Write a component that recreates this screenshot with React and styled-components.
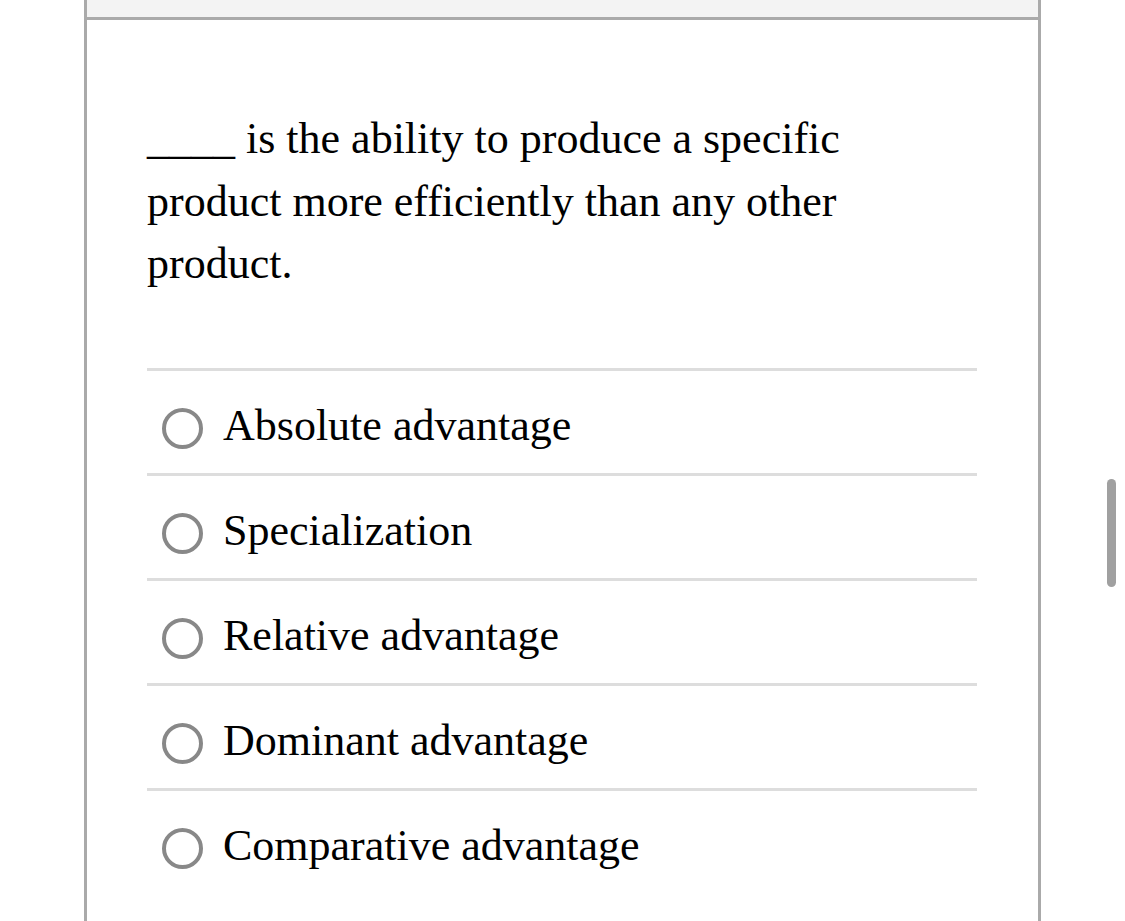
import React from 'react';
import styled, { createGlobalStyle } from 'styled-components';

const GlobalStyle = createGlobalStyle`
  html, body {
    margin: 0;
    padding: 0;
    background: #fff;
    height: 100%;
    overflow: hidden;
  }
  body {
    font-family: "Liberation Serif", "Times New Roman", serif;
    color: #000;
  }
`;

const Page = styled.div`
  position: relative;
  height: 921px;
  padding-left: 84px;
`;

const Frame = styled.div`
  width: 951px;
  height: 100%;
  border-left: 3px solid #aaa;
  border-right: 3px solid #aaa;
`;

const TopBar = styled.div`
  height: 17px;
  background: #f3f3f3;
  border-bottom: 3px solid #aaa;
`;

const Content = styled.div`
  padding: 88px 61px 0 60px;
`;

const Question = styled.p`
  max-width: 730px;
  margin: 0 0 72px;
  font-size: 44px;
  line-height: 62.5px;
`;

const Options = styled.div`
  display: flex;
  flex-direction: column;
`;

const Option = styled.label`
  box-sizing: border-box;
  display: flex;
  align-items: center;
  height: 105px;
  padding-top: 8px;
  border-top: 3px solid #ddd;
  font-size: 44px;
  cursor: pointer;
`;

const Radio = styled.span`
  flex: none;
  box-sizing: border-box;
  width: 41px;
  height: 41px;
  margin: 6px 20px 0 15px;
  border: 4px solid #888;
  border-radius: 50%;
`;

const Scrollbar = styled.div`
  position: absolute;
  top: 479px;
  left: 1107px;
  width: 9px;
  height: 108px;
  border-radius: 5px;
  background: #a0a0a0;
`;

const choices = [
  'Absolute advantage',
  'Specialization',
  'Relative advantage',
  'Dominant advantage',
  'Comparative advantage',
];

export default function App() {
  return (
    <Page>
      <GlobalStyle />
      <Frame>
        <TopBar />
        <Content>
          <Question>
            ____ is the ability to produce a specific product more efficiently than any other product.
          </Question>
          <Options>
            {choices.map((c) => (
              <Option key={c}>
                <Radio />
                {c}
              </Option>
            ))}
          </Options>
        </Content>
      </Frame>
      <Scrollbar />
    </Page>
  );
}
